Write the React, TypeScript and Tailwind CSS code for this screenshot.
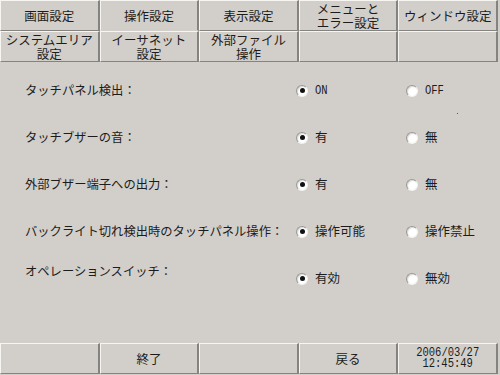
import React from "react";

const jp = { fontFamily: '"Noto Sans CJK JP", "Noto Sans", sans-serif' };
const mono = { fontFamily: '"Liberation Mono", "DejaVu Sans Mono", monospace' };

function Tab({ label, active, small }: { label?: React.ReactNode; active?: boolean; small?: boolean }) {
  return (
    <div
      className={`flex items-center justify-center text-center border-t border-l border-r-2 border-t-[#f6f5f2] border-l-[#f6f5f2] border-r-[#858380] ${
        active ? "border-b border-b-transparent" : "border-b border-b-[#858380]"
      } ${small ? "text-[12.5px] leading-[14px]" : "text-[12.5px] leading-[15px]"}`}
    >
      {label}
    </div>
  );
}

function Radio({ checked }: { checked?: boolean }) {
  return (
    <span className="shrink-0 w-[12px] h-[12px] rounded-full border border-t-[#9a9894] border-l-[#9a9894] border-r-[#f2f1ee] border-b-[#f2f1ee] bg-white flex items-center justify-center shadow-[inset_1px_1px_1px_rgba(0,0,0,0.15)]">
      {checked && <span className="w-[5px] h-[5px] rounded-full bg-[#111]" />}
    </span>
  );
}

function Option({ checked, text, isMono }: { checked?: boolean; text: string; isMono?: boolean }) {
  return (
    <div className="shrink-0 flex items-center gap-[7px] w-[110px]">
      <Radio checked={checked} />
      {isMono ? (
        <span style={mono} className="text-[10.5px] inline-block scale-y-[1.3] origin-center">
          {text}
        </span>
      ) : (
        <span className="text-[12.5px]">{text}</span>
      )}
    </div>
  );
}

function Row({ label, on, off, isMono, labelUp }: { label: string; on: string; off: string; isMono?: boolean; labelUp?: boolean }) {
  return (
    <div className="flex items-center h-[47px] pl-[25px]">
      <div className={`shrink-0 w-[271px] text-[12.3px] ${labelUp ? "mb-[15px]" : ""}`}>{label}</div>
      <Option checked text={on} isMono={isMono} />
      <Option text={off} isMono={isMono} />
    </div>
  );
}

export default function App() {
  return (
    <div style={jp} className="w-[500px] h-[375px] bg-[#d2cfca] text-[#1c1c1c] flex flex-col overflow-hidden relative">
      <div className="w-[498px] grid grid-cols-5 h-[31px]">
        <Tab label="画面設定" />
        <Tab label="操作設定" active />
        <Tab label="表示設定" />
        <Tab small label={<span>メニューと<br />エラー設定</span>} />
        <Tab label="ウィンドウ設定" />
      </div>
      <div className="w-[498px] grid grid-cols-5 h-[31px]">
        <Tab small label={<span>システムエリア<br />設定</span>} />
        <Tab small label={<span>イーサネット<br />設定</span>} />
        <Tab small label={<span>外部ファイル<br />操作</span>} />
        <Tab />
        <Tab />
      </div>

      <div className="flex-1 flex flex-col pt-[5px]">
        <Row label="タッチパネル検出：" on="ON" off="OFF" isMono />
        <Row label="タッチブザーの音：" on="有" off="無" />
        <Row label="外部ブザー端子への出力：" on="有" off="無" />
        <Row label="バックライト切れ検出時のタッチパネル操作：" on="操作可能" off="操作禁止" />
        <Row label="オペレーションスイッチ：" on="有効" off="無効" labelUp />
      </div>

      <span className="absolute left-[457px] top-[113px] w-[1px] h-[1px] bg-[#555]" />

      <div className="w-[498px] grid grid-cols-5 h-[31px] mb-[1px]">
        <Tab />
        <Tab label="終了" />
        <Tab />
        <Tab label="戻る" />
        <div className="flex flex-col items-center justify-center border-t border-l border-r-2 border-b border-t-[#f6f5f2] border-l-[#f6f5f2] border-r-[#858380] border-b-[#858380]">
          <span style={mono} className="text-[10.5px] leading-[11px] inline-block scale-y-[1.2]">2006/03/27</span>
          <span style={mono} className="text-[10.5px] leading-[11px] inline-block scale-y-[1.2]">12:45:49</span>
        </div>
      </div>
    </div>
  );
}
